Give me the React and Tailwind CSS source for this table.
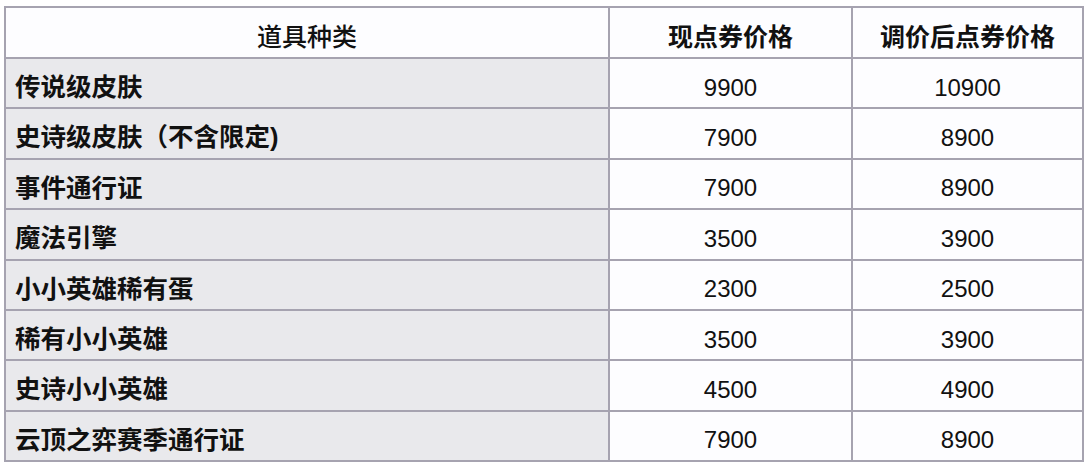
import React from "react";

const rows = [
  ["传说级皮肤", "9900", "10900"],
  ["史诗级皮肤（不含限定)", "7900", "8900"],
  ["事件通行证", "7900", "8900"],
  ["魔法引擎", "3500", "3900"],
  ["小小英雄稀有蛋", "2300", "2500"],
  ["稀有小小英雄", "3500", "3900"],
  ["史诗小小英雄", "4500", "4900"],
  ["云顶之弈赛季通行证", "7900", "8900"],
];

const cjk = { fontFamily: '"Liberation Sans", "Noto Sans CJK SC", sans-serif' };

export default function App() {
  return (
    <div className="w-[1086px] h-[462px] bg-white pt-[6px] pl-[4px] overflow-hidden" style={cjk}>
      <table className="border-collapse w-[1078px] table-fixed text-[#111] text-[24px]">
        <colgroup>
          <col className="w-[604px]" />
          <col className="w-[243px]" />
          <col className="w-[231px]" />
        </colgroup>
        <thead>
          <tr className="h-[51px]">
            <th className="border-2 border-[#a6a3b0] bg-[#fdfdff] font-medium text-[25px] text-center pt-[9px] leading-none">道具种类</th>
            <th className="border-2 border-[#a6a3b0] bg-[#fdfdff] font-bold text-[25px] text-center pt-[9px] leading-none">现点券价格</th>
            <th className="border-2 border-[#a6a3b0] bg-[#fdfdff] font-bold text-[25px] text-center pt-[9px] leading-none">调价后点券价格</th>
          </tr>
        </thead>
        <tbody>
          {rows.map((r, i) => (
            <tr key={i} className="h-[50.4px]">
              <td className="border-2 border-[#a6a3b0] bg-[#e9e9ec] font-bold text-[25.5px] text-left pl-[9px] pt-[9px] leading-none whitespace-nowrap">{r[0]}</td>
              <td className="border-2 border-[#a6a3b0] bg-[#fdfdff] text-center pt-[9px] leading-none">{r[1]}</td>
              <td className="border-2 border-[#a6a3b0] bg-[#fdfdff] text-center pt-[9px] leading-none">{r[2]}</td>
            </tr>
          ))}
        </tbody>
      </table>
    </div>
  );
}
